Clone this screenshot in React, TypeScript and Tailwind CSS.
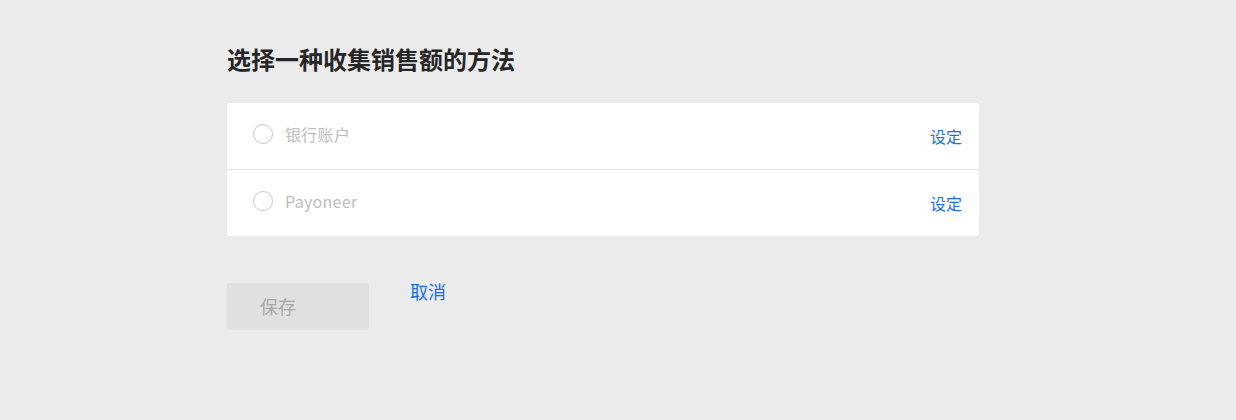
const font = {
  fontFamily: '"Noto Sans CJK SC", "Open Sans", "Liberation Sans", sans-serif',
};

const methods = ["银行账户", "Payoneer"];

export default function App() {
  return (
    <div className="min-h-[420px] w-full bg-[#ebebeb]" style={font}>
      <div className="ml-[227px] w-[752px] pt-[41px]">
        <h1 className="text-[24px] font-bold leading-[36px] text-[#262626]">
          选择一种收集销售额的方法
        </h1>

        <div className="mt-[26px] rounded-[3px] bg-white">
          {methods.map((m, i) => (
            <div
              key={m}
              className={
                "flex h-[66px] items-center justify-between pl-[26px] pr-[17px] " +
                (i > 0 ? "border-t border-[#e6e6e6] h-[67px]" : "")
              }
            >
              <label className="flex items-center gap-[12px] -mt-[4px] cursor-pointer">
                <span className="h-[20px] w-[20px] rounded-full border border-[#c8c8c8] bg-white" />
                <span className="text-[16px] tracking-[0.3px] text-[#bdbdbd]">{m}</span>
              </label>
              <button className="-mt-[1px] text-[16px] text-[#1a6ee0]">设定</button>
            </div>
          ))}
        </div>

        <div className="mt-[47px] flex items-start gap-[41px]">
          <button className="h-[47px] w-[142px] rounded-[3px] bg-[#e0e0e0] pl-[33px] text-left text-[18px] text-[#a8a8a8]">
            保存
          </button>
          <button className="-mt-[5px] text-[18px] text-[#1a6ee0]">取消</button>
        </div>
      </div>
    </div>
  );
}
